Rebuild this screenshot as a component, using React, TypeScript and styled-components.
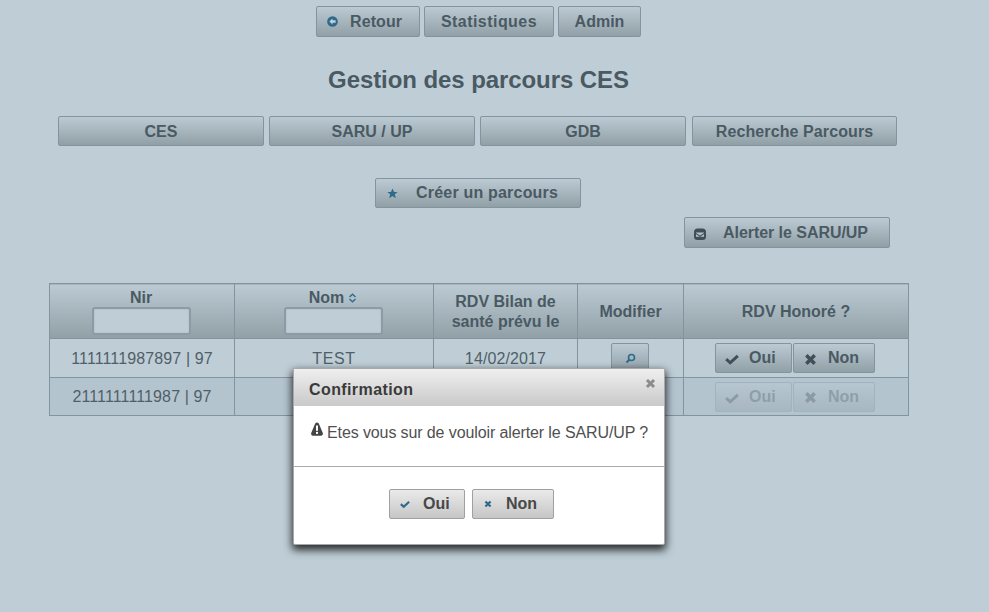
import styled, { createGlobalStyle } from "styled-components";
import { ReactNode } from "react";

const GlobalStyle = createGlobalStyle`
  html, body {
    margin: 0;
    padding: 0;
    background: #bfced6;
    overflow: hidden;
  }
  body {
    font-family: "Liberation Sans", Arial, sans-serif;
    color: #4a5a63;
  }
`;

function ArrowIcon() {
  return (
    <svg width="11" height="11" viewBox="0 0 12 12">
      <circle cx="6" cy="6" r="5.8" fill="#2e6a8c" />
      <path d="M2.600 6 6 2.800v1.900h3.400v2.600H6v1.900z" fill="#c3d2d9" />
    </svg>
  );
}

function StarIcon() {
  return (
    <svg width="11" height="11" viewBox="0 0 11 11">
      <path d="M5.500.5 7 4h3.700L7.800 6.300l1 3.900-3.300-2.100-3.300 2.100 1-3.900L.3 4H4z" fill="#2e6a8c" />
    </svg>
  );
}

function MailIcon() {
  return (
    <svg width="12" height="12" viewBox="0 0 12 12">
      <rect x="0" y="0.5" width="12" height="11.500" rx="3.500" fill="#414f58" />
      <path d="M2 4.600h8v.5L6 7.500 2 5.100z" fill="#b4c2c9" />
      <path d="M2 6.300 6 8.700l4-2.400v2.500H2z" fill="#b4c2c9" />
    </svg>
  );
}

function CheckIcon({ size, color }: { size: number; color: string }) {
  return (
    <svg width={size} height={size} viewBox="0 0 14 14">
      <path d="M1.200 7.200 5.200 10.800 12.800 3.800" fill="none" stroke={color} strokeWidth="3" />
    </svg>
  );
}

function CrossIcon({ size, color }: { size: number; color: string }) {
  return (
    <svg width={size} height={size} viewBox="0 0 14 14">
      <path d="M2.500 2.500 11.500 11.500M11.500 2.500 2.500 11.500" fill="none" stroke={color} strokeWidth="3.800" />
    </svg>
  );
}

function SearchIcon() {
  return (
    <svg width="11" height="11" viewBox="0 0 11 11">
      <circle cx="6.500" cy="4.500" r="3" fill="none" stroke="#2e6a8c" strokeWidth="1.600" />
      <path d="M4.300 6.700 1.500 9.500" stroke="#2e6a8c" strokeWidth="2" />
    </svg>
  );
}

function SortIcon() {
  return (
    <svg width="9" height="10" viewBox="0 0 9 10">
      <path d="M1.500 4 4.500 1.200 7.500 4M1.500 6 4.500 8.800 7.500 6" fill="none" stroke="#2e6a8c" strokeWidth="1.300" />
    </svg>
  );
}

function AlertIcon() {
  return (
    <svg width="14" height="15" viewBox="0 0 14 15">
      <path d="M7 .5c1.100 0 1.700.7 2.100 1.800l3.600 8.500c.6 1.500-.1 2.900-1.700 2.900H3c-1.600 0-2.300-1.400-1.700-2.900l3.600-8.500C5.300 1.200 5.900.5 7 .5z" fill="#444" />
      <rect x="6" y="3.500" width="2" height="5.300" fill="#fff" />
      <rect x="6" y="9.900" width="2" height="2" fill="#fff" />
    </svg>
  );
}

const Page = styled.div`
  width: 957px;
  height: 612px;
  position: relative;
`;

const Button = styled.button<{ $w?: number; $h?: number; $track?: number }>`
  display: flex;
  align-items: center;
  box-sizing: border-box;
  width: ${(p) => (p.$w ? `${p.$w}px` : "auto")};
  height: ${(p) => p.$h ?? 31}px;
  margin: 0;
  padding: 0;
  border: 1px solid #82949e;
  border-radius: 2px;
  background: linear-gradient(to bottom, #bccbd3 0%, #919fa7 100%);
  color: #4a5a63;
  font: bold 16px "Liberation Sans", Arial, sans-serif;
  letter-spacing: ${(p) => p.$track ?? 0}px;
  white-space: nowrap;
`;

const CenteredButton = styled(Button)`
  justify-content: center;
`;

const IconSlot = styled.span<{ $left: number; $w: number; $down?: number }>`
  display: flex;
  justify-content: center;
  width: ${(p) => p.$w}px;
  margin-left: ${(p) => p.$left}px;
  margin-top: ${(p) => p.$down ?? 0}px;
  flex-shrink: 0;
`;

const TopNav = styled.nav`
  display: flex;
  justify-content: center;
  gap: 4px;
  padding-top: 6px;
`;

const Title = styled.h1`
  margin: 29px 0 0;
  height: 28px;
  line-height: 28px;
  text-align: center;
  font-size: 24px;
  font-weight: bold;
  letter-spacing: -0.08px;
`;

const Tabs = styled.div`
  display: flex;
  gap: 5px;
  margin: 22px 0 0 58px;
`;

const TabButton = styled(CenteredButton)`
  padding-top: 1px;

  &:last-child {
    margin-left: 1px;
  }
`;

const CreateRow = styled.div`
  display: flex;
  margin: 32px 0 0 375px;
`;

const AlertRow = styled.div`
  display: flex;
  margin: 9px 0 0 684px;
`;

const Table = styled.table`
  width: 859px;
  margin: 35px 0 0 49px;
  border-collapse: collapse;
  table-layout: fixed;
  font-size: 16px;
`;

const HeadCell = styled.th`
  box-sizing: border-box;
  height: 55px;
  padding: 1px 0 0;
  border: 1px solid #82949e;
  background: linear-gradient(to bottom, #bccbd3 0%, #919fa7 100%);
  color: #4a5a63;
  font-weight: bold;
  font-size: 16px;
  line-height: 20px;
  text-align: center;
  vertical-align: middle;
`;

const FilterCell = styled(HeadCell)`
  padding: 3px 2px 0 0;
  vertical-align: top;
`;

const FilterLabel = styled.div`
  display: flex;
  justify-content: center;
  align-items: center;
  gap: 4px;
  box-sizing: border-box;
  height: 20px;
  padding-top: 2px;
`;

const FilterInput = styled.input`
  display: block;
  box-sizing: border-box;
  width: 99px;
  height: 28px;
  margin: 0 auto;
  padding: 0;
  border: 2px solid #8a9ca5;
  border-radius: 3px;
  background: #bfced6;
  box-shadow: inset 0 0 2px #a5b4bc;
`;

const Row = styled.tr<{ $alt?: boolean }>`
  background: ${(p) => (p.$alt ? "#b4c4cf" : "#bfced6")};
`;

const Cell = styled.td<{ $h: number; $track?: number; $low?: boolean }>`
  box-sizing: border-box;
  height: ${(p) => p.$h}px;
  padding: ${(p) => (p.$low ? "2px 0 0" : "0")};
  border: 1px solid #82949e;
  text-align: center;
  font-size: 16px;
  letter-spacing: ${(p) => p.$track ?? 0.12}px;
  color: #4f5f68;
  vertical-align: middle;
`;

const ActionGroup = styled.div<{ $off?: boolean }>`
  display: flex;
  gap: 1px;
  padding-left: 31px;
  opacity: ${(p) => (p.$off ? 0.35 : 1)};
`;

const SmallButton = styled(CenteredButton)`
  margin: 0 0 0 33px;
`;

const Dialog = styled.div`
  position: absolute;
  left: 293px;
  top: 368px;
  box-sizing: border-box;
  width: 372px;
  height: 177px;
  background: #fff;
  border: 1px solid #a8a8a8;
  border-radius: 2px;
  box-shadow: 0 4px 8px 1px rgba(0, 0, 0, 0.8);
  color: #444;
`;

const DialogHeader = styled.header`
  position: relative;
  box-sizing: border-box;
  height: 37px;
  padding: 11px 0 0 15px;
  background: linear-gradient(to bottom, #efefef 0%, #c9c9c9 100%);
  font-size: 16px;
  font-weight: bold;
  line-height: 20px;
  letter-spacing: 0.4px;
  color: #3a3a3a;
`;

const CloseMark = styled.span`
  position: absolute;
  right: 8px;
  top: 9px;
  display: flex;
`;

const DialogMessage = styled.p`
  display: flex;
  align-items: flex-start;
  gap: 3px;
  box-sizing: border-box;
  height: 61px;
  margin: 0;
  padding: 16px 0 0 16px;
  border-bottom: 1px solid #aaa;
  font-size: 16px;
  line-height: 19px;
  letter-spacing: -0.11px;
  color: #505050;
`;

const MessageText = styled.span`
  padding-top: 1px;
`;

const DialogFooter = styled.footer`
  display: flex;
  gap: 7px;
  padding: 22px 0 0 95px;
`;

const GreyButton = styled(Button)`
  border-color: #a0a0a0;
  background: linear-gradient(to bottom, #eaeaea 0%, #c6c6c6 100%);
  color: #484848;
`;

const LabelText = styled.span<{ $gap: number }>`
  margin-left: ${(p) => p.$gap}px;
`;

function Label({ children, gap }: { children: ReactNode; gap: number }) {
  return <LabelText $gap={gap}>{children}</LabelText>;
}

const nonColor = "#414f58";

export default function App() {
  return (
    <Page>
      <GlobalStyle />
      <TopNav>
        <Button $w={104} $track={0.1}>
          <IconSlot $left={9} $w={12}>
            <ArrowIcon />
          </IconSlot>
          <Label gap={12}>Retour</Label>
        </Button>
        <CenteredButton $w={130} $track={0.45}>
          Statistiques
        </CenteredButton>
        <CenteredButton $w={83}>Admin</CenteredButton>
      </TopNav>
      <Title>Gestion des parcours CES</Title>
      <Tabs>
        <TabButton $w={206} $h={30}>CES</TabButton>
        <TabButton $w={206} $h={30}>SARU / UP</TabButton>
        <TabButton $w={206} $h={30}>GDB</TabButton>
        <TabButton $w={205} $h={30} $track={0.1}>Recherche Parcours</TabButton>
      </Tabs>
      <CreateRow>
        <Button $w={206} $h={30} $track={0.2}>
          <IconSlot $left={10} $w={12}>
            <StarIcon />
          </IconSlot>
          <Label gap={18}>Créer un parcours</Label>
        </Button>
      </CreateRow>
      <AlertRow>
        <Button $w={206} $track={-0.05}>
          <IconSlot $left={9} $w={12} $down={3}>
            <MailIcon />
          </IconSlot>
          <Label gap={17}>Alerter le SARU/UP</Label>
        </Button>
      </AlertRow>
      <Table>
        <colgroup>
          <col style={{ width: 185 }} />
          <col style={{ width: 199 }} />
          <col style={{ width: 144 }} />
          <col style={{ width: 106 }} />
          <col style={{ width: 225 }} />
        </colgroup>
        <thead>
          <tr>
            <FilterCell>
              <FilterLabel>Nir</FilterLabel>
              <FilterInput />
            </FilterCell>
            <FilterCell>
              <FilterLabel>
                Nom <SortIcon />
              </FilterLabel>
              <FilterInput />
            </FilterCell>
            <HeadCell>
              RDV Bilan de
              <br />
              santé prévu le
            </HeadCell>
            <HeadCell>Modifier</HeadCell>
            <HeadCell>RDV Honoré ?</HeadCell>
          </tr>
        </thead>
        <tbody>
          <Row>
            <Cell $h={39} $low>1111111987897 | 97</Cell>
            <Cell $h={39} $low $track={0.6}>TEST</Cell>
            <Cell $h={39} $low>14/02/2017</Cell>
            <Cell $h={39}>
              <SmallButton $w={38} $h={30}>
                <SearchIcon />
              </SmallButton>
            </Cell>
            <Cell $h={39}>
              <ActionGroup>
                <Button $w={77} $h={30}>
                  <IconSlot $left={9} $w={14} $down={2}>
                    <CheckIcon size={14} color={nonColor} />
                  </IconSlot>
                  <Label gap={10}>Oui</Label>
                </Button>
                <Button $w={82} $h={30}>
                  <IconSlot $left={9} $w={14} $down={2}>
                    <CrossIcon size={13} color={nonColor} />
                  </IconSlot>
                  <Label gap={11}>Non</Label>
                </Button>
              </ActionGroup>
            </Cell>
          </Row>
          <Row $alt>
            <Cell $h={38}>2111111111987 | 97</Cell>
            <Cell $h={38} />
            <Cell $h={38} />
            <Cell $h={38} />
            <Cell $h={38}>
              <ActionGroup $off>
                <Button $w={77} $h={30}>
                  <IconSlot $left={9} $w={14} $down={2}>
                    <CheckIcon size={14} color={nonColor} />
                  </IconSlot>
                  <Label gap={10}>Oui</Label>
                </Button>
                <Button $w={82} $h={30}>
                  <IconSlot $left={9} $w={14} $down={2}>
                    <CrossIcon size={13} color={nonColor} />
                  </IconSlot>
                  <Label gap={11}>Non</Label>
                </Button>
              </ActionGroup>
            </Cell>
          </Row>
        </tbody>
      </Table>
      <Dialog>
        <DialogHeader>
          Confirmation
          <CloseMark>
            <CrossIcon size={11} color="#8c8c8c" />
          </CloseMark>
        </DialogHeader>
        <DialogMessage>
          <AlertIcon />
          <MessageText>Etes vous sur de vouloir alerter le SARU/UP ?</MessageText>
        </DialogMessage>
        <DialogFooter>
          <GreyButton $w={76} $h={30}>
            <IconSlot $left={9} $w={12}>
              <CheckIcon size={10} color="#2e6a8c" />
            </IconSlot>
            <Label gap={12}>Oui</Label>
          </GreyButton>
          <GreyButton $w={82} $h={30}>
            <IconSlot $left={9} $w={12}>
              <CrossIcon size={8} color="#2e6a8c" />
            </IconSlot>
            <Label gap={12}>Non</Label>
          </GreyButton>
        </DialogFooter>
      </Dialog>
    </Page>
  );
}
